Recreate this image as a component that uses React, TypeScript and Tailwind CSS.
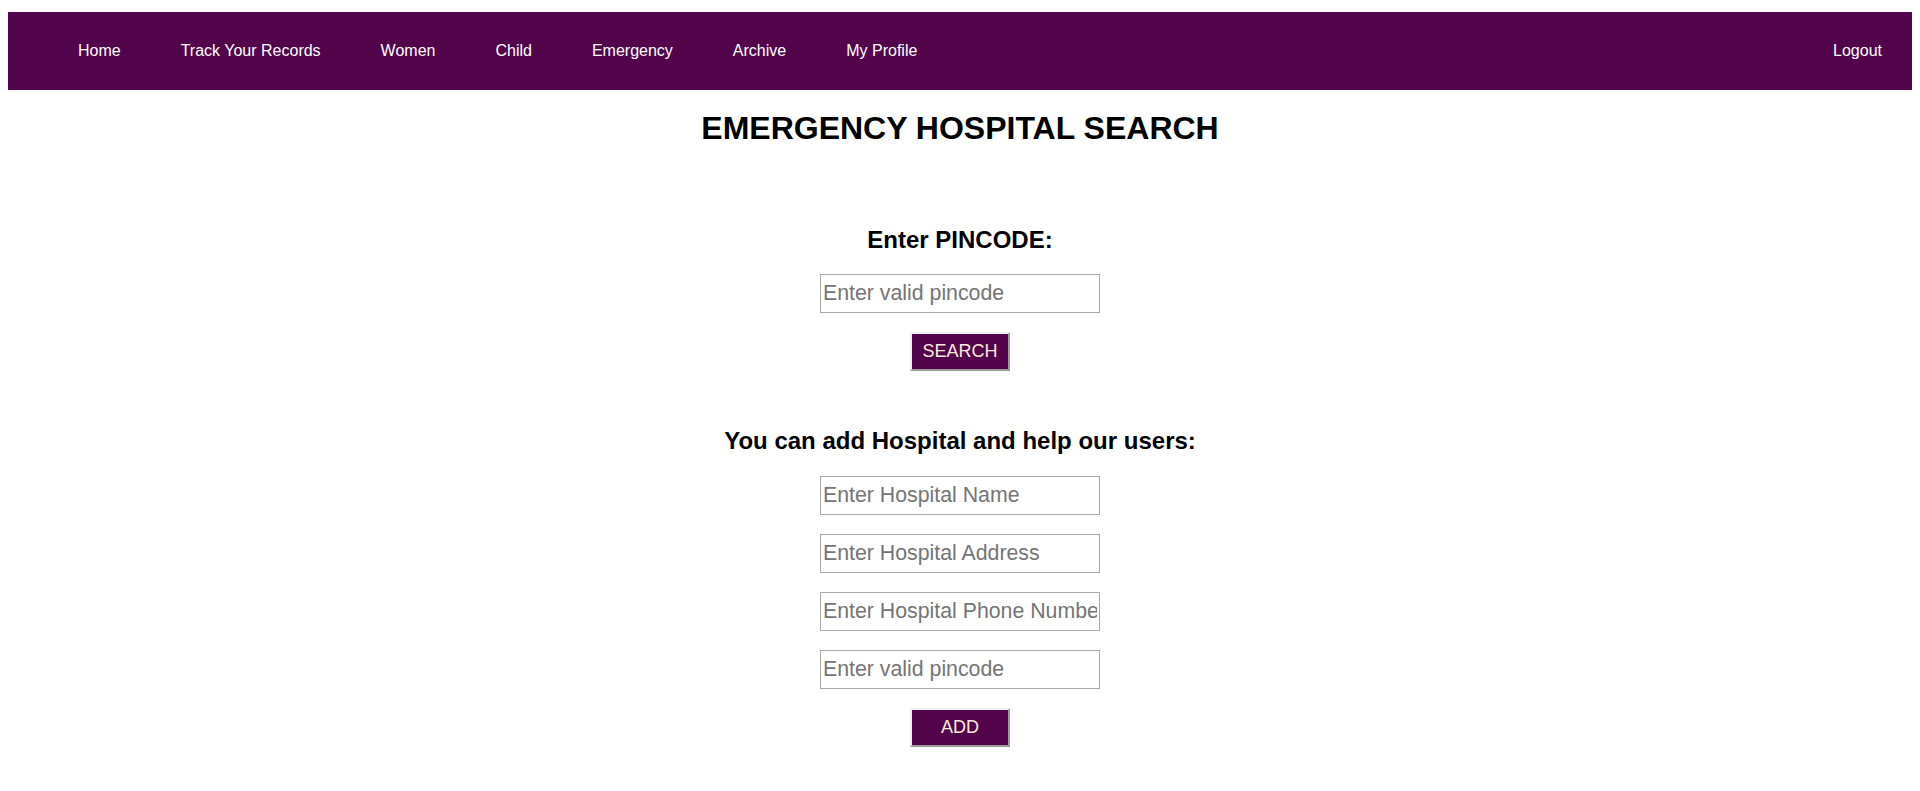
import { useState } from "react";

const links = ["Home", "Track Your Records", "Women", "Child", "Emergency", "Archive", "My Profile"];

function Field({ placeholder, className = "" }: { placeholder: string; className?: string }) {
  return (
    <input
      type="text"
      placeholder={placeholder}
      className={`block w-[280px] h-[39px] border border-[#a9a9a9] bg-white px-[2px] text-[21.3px] text-black placeholder:text-[#757575] outline-none ${className}`}
    />
  );
}

function PurpleButton({ label, className = "" }: { label: string; className?: string }) {
  return (
    <button
      className={`block w-[100px] h-[39px] bg-[#52054b] text-[18px] text-[#ffead8] border-2 border-t-[#efefef] border-l-[#efefef] border-r-[#9c9c9c] border-b-[#9c9c9c] ${className}`}
    >
      {label}
    </button>
  );
}

export default function App() {
  const [pin, setPin] = useState("");

  return (
    <div className="min-h-screen bg-white font-['Liberation_Sans',Arial,sans-serif] text-black">
      <nav className="mx-2 mt-3 h-[78px] bg-[#52054b] flex items-center pl-10 text-white text-base">
        <ul className="flex flex-1 items-center">
          {links.map((l) => (
            <li key={l} className="px-[30px] leading-[18px]">
              <a href="#" className="text-white">{l}</a>
            </li>
          ))}
          <li className="ml-auto px-[30px] leading-[18px]">
            <a href="#" className="text-white">Logout</a>
          </li>
        </ul>
      </nav>

      <main className="flex flex-col items-center">
        <h1 className="mt-5 text-[32px] leading-[37px] font-bold">EMERGENCY HOSPITAL SEARCH</h1>

        <h2 className="mt-[79px] text-2xl leading-[28px] font-bold">Enter PINCODE:</h2>
        <input
          type="text"
          value={pin}
          onChange={(e) => setPin(e.target.value)}
          placeholder="Enter valid pincode"
          className="mt-5 block w-[280px] h-[39px] border border-[#a9a9a9] bg-white px-[2px] text-[21.3px] text-black placeholder:text-[#757575] outline-none"
        />
        <PurpleButton label="SEARCH" className="mt-[19px]" />

        <h2 className="mt-[56px] text-2xl leading-[28px] font-bold">You can add Hospital and help our users:</h2>
        <Field placeholder="Enter Hospital Name" className="mt-[21px]" />
        <Field placeholder="Enter Hospital Address" className="mt-[19px]" />
        <Field placeholder="Enter Hospital Phone Number" className="mt-[19px]" />
        <Field placeholder="Enter valid pincode" className="mt-[19px]" />
        <PurpleButton label="ADD" className="mt-[19px]" />
      </main>
    </div>
  );
}
